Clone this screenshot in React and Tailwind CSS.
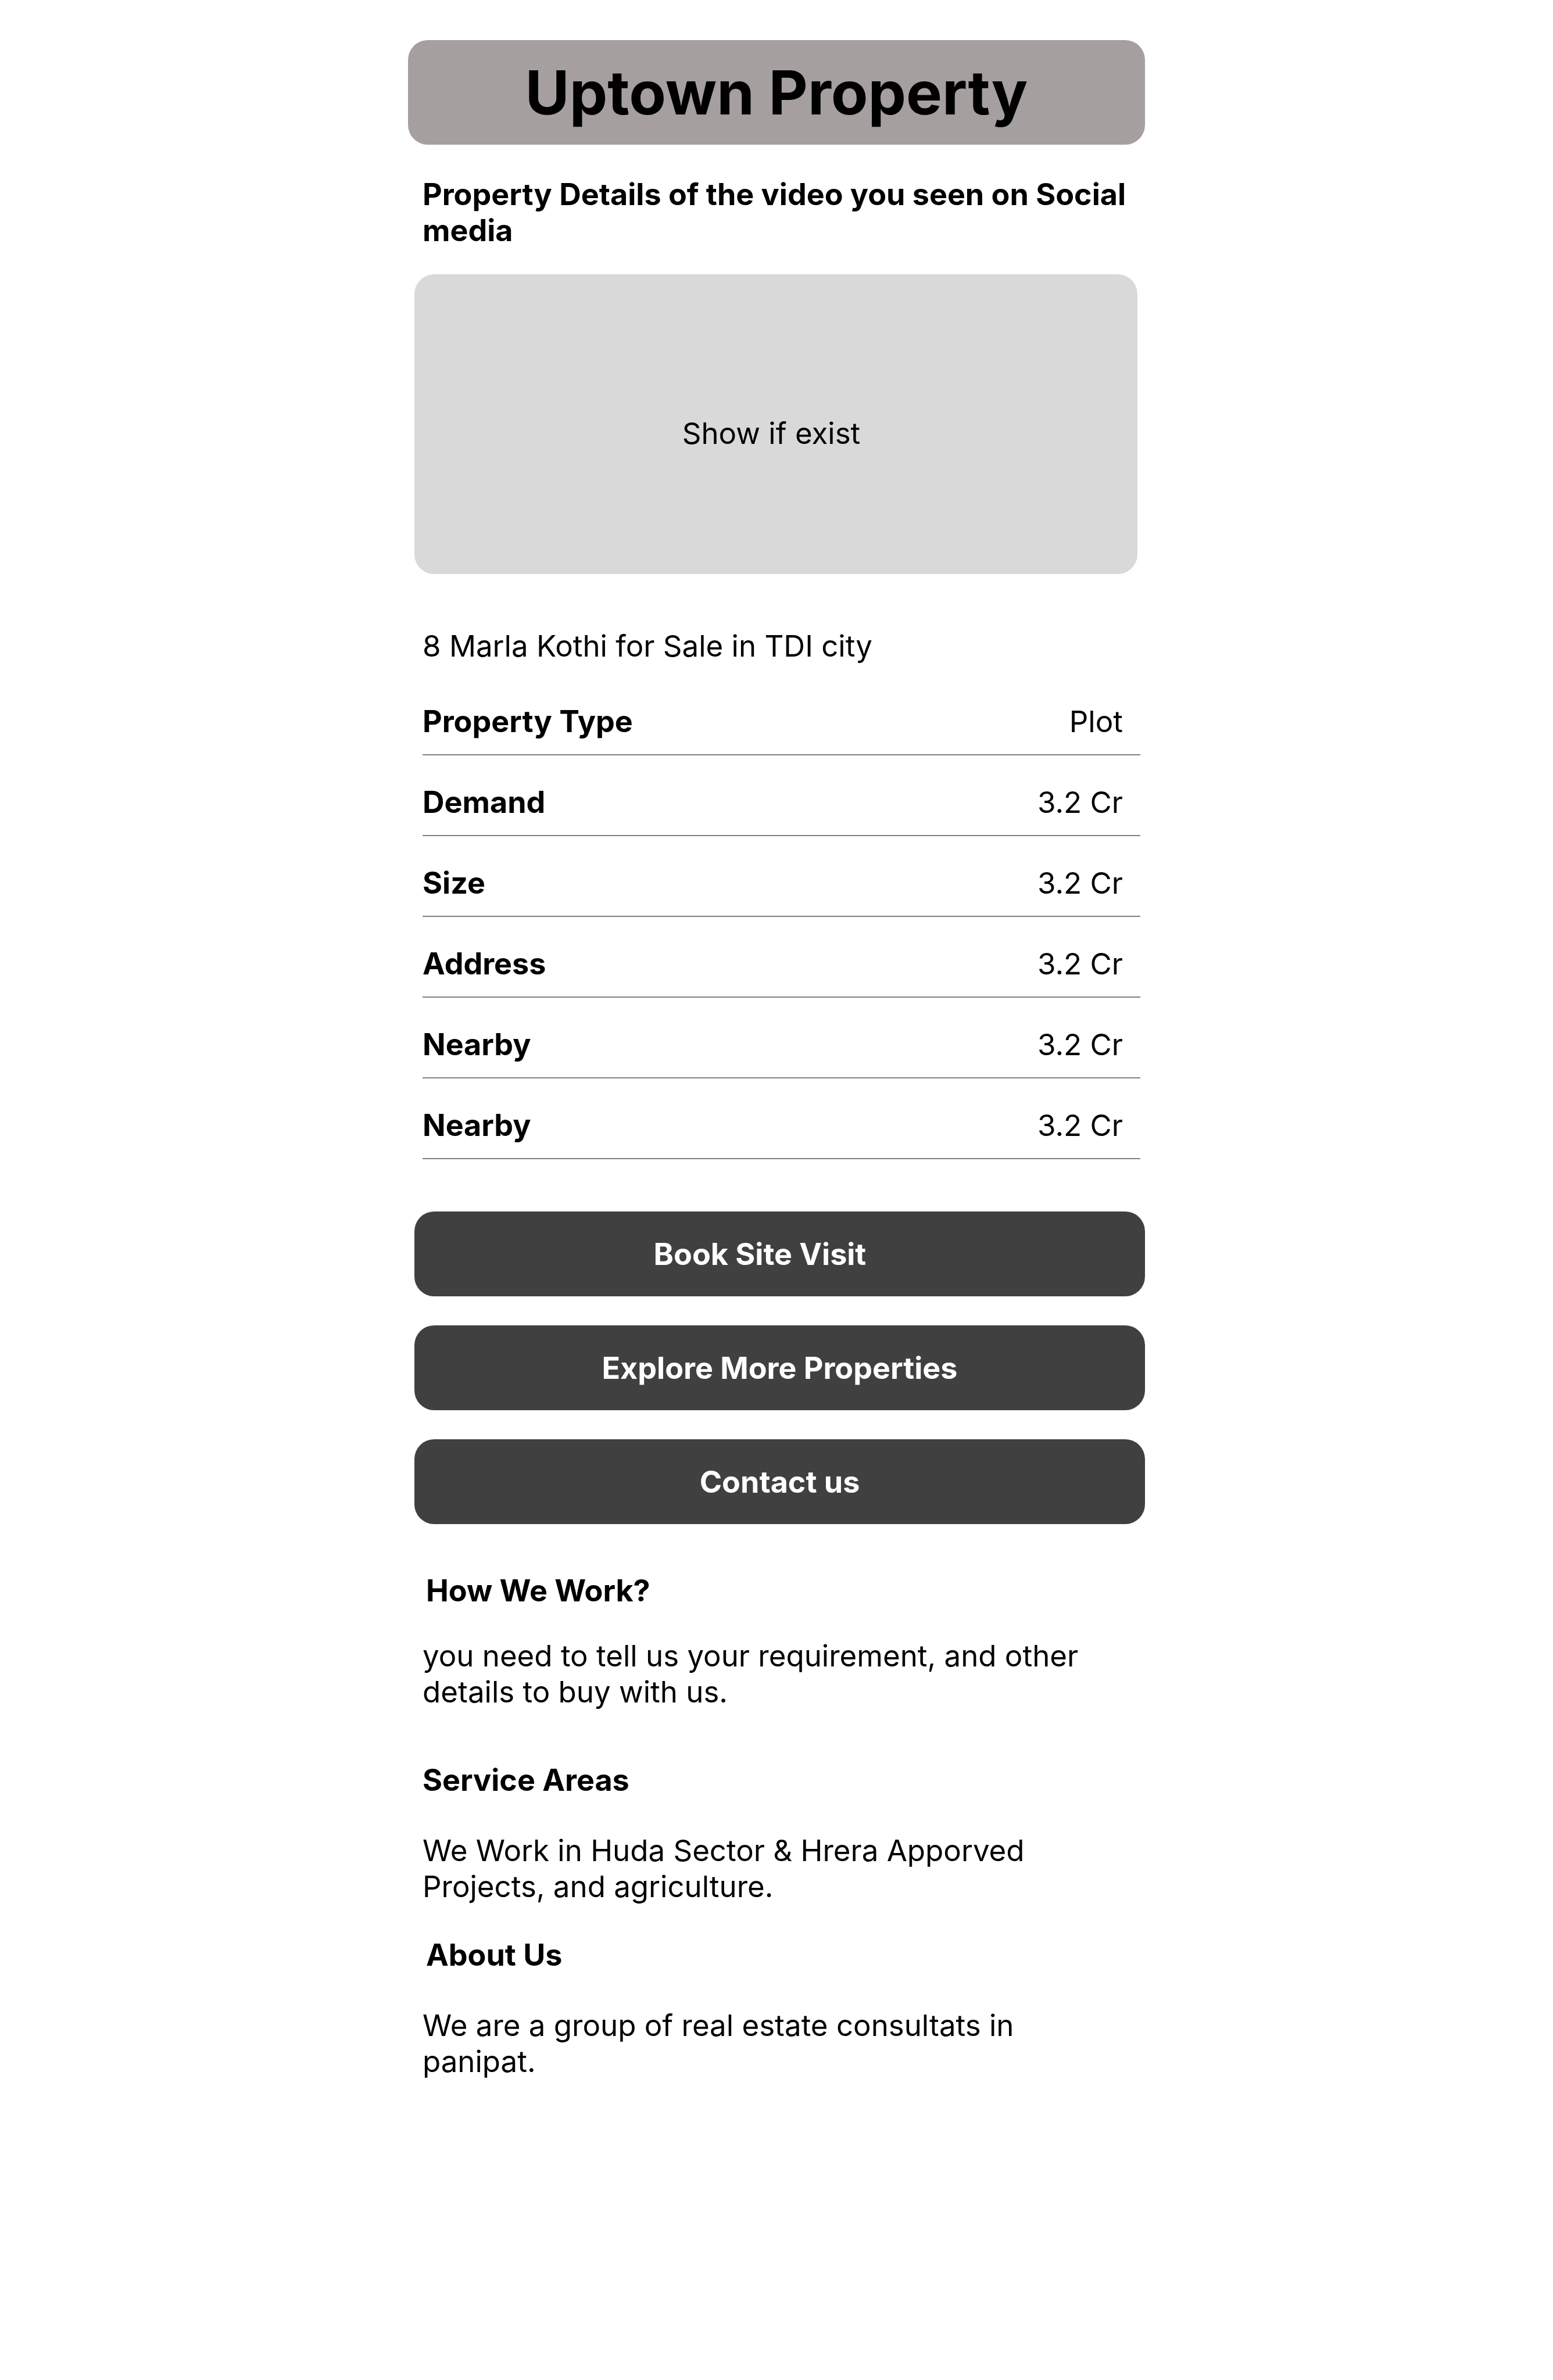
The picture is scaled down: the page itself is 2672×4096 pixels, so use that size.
import React from "react";

const details = [
  { label: "Property Type", value: "Plot" },
  { label: "Demand", value: "3.2 Cr" },
  { label: "Size", value: "3.2 Cr" },
  { label: "Address", value: "3.2 Cr" },
  { label: "Nearby", value: "3.2 Cr" },
  { label: "Nearby", value: "3.2 Cr" },
];

function ActionButton({ children, className = "" }) {
  return (
    <button
      type="button"
      className={`w-full rounded-[34px] bg-[#404040] pt-[43px] pb-[41px] text-center text-[52px] leading-[62px] font-bold text-white ${className}`}
    >
      {children}
    </button>
  );
}

function InfoSection({ title, children, className = "", titleClassName = "" }) {
  return (
    <section className={`flex flex-col pl-[25px] ${className}`}>
      <h2 className={`text-[52px] leading-[62px] font-bold ${titleClassName}`}>{title}</h2>
      <p className="max-w-[1212px]">{children}</p>
    </section>
  );
}

export default function App() {
  return (
    <div className="min-h-screen bg-white font-['Inter',sans-serif] text-[51px] leading-[62px] text-black">
      <div className="mx-auto w-full max-w-[1268px] pt-[69px] pb-20">
        <header className="rounded-[34px] bg-[#a59f9f] py-7 text-center">
          <h1 className="text-[104px] leading-[124px] font-bold">Uptown Property</h1>
        </header>

        <main>
          <p className="mt-[55px] pl-[25px] text-[52px] leading-[62px] font-bold">
            Property Details of the video you seen on Social media
          </p>

          <div className="mt-[44px] mr-[13px] ml-[11px] flex h-[516px] items-center justify-center rounded-[34px] bg-[#d9d9d9] pt-8 pr-4">
            Show if exist
          </div>

          <p className="mt-[93px] pl-[25px]">8 Marla Kothi for Sale in TDI city</p>

          <div className="mt-[18px] mr-2 ml-[25px]">
            <table className="w-full border-collapse">
              <tbody>
                {details.map((row, i) => (
                  <tr key={i} className="border-b-2 border-[#808080]">
                    <th scope="row" className="pt-[50px] pb-[25px] text-left text-[52px] leading-[62px] font-bold">
                      {row.label}
                    </th>
                    <td className="pt-[50px] pr-[30px] pb-[25px] text-right">{row.value}</td>
                  </tr>
                ))}
              </tbody>
            </table>
          </div>

          <div className="mt-[90px] ml-[11px] flex flex-col gap-[50px]">
            <ActionButton className="pr-[68px]">Book Site Visit</ActionButton>
            <ActionButton>Explore More Properties</ActionButton>
            <ActionButton>Contact us</ActionButton>
          </div>

          <InfoSection title="How We Work?" className="mt-[84px] gap-[50px]" titleClassName="pl-1.5">
            you need to tell us your requirement, and other details to buy with us.
          </InfoSection>
          <InfoSection title="Service Areas" className="mt-[90px] gap-[59px]">
            We Work in Huda Sector &amp; Hrera Apporved Projects, and agriculture.
          </InfoSection>
          <InfoSection title="About Us" className="mt-[56px] gap-[59px]" titleClassName="pl-1.5">
            We are a group of real estate consultats in panipat.
          </InfoSection>
        </main>
      </div>
    </div>
  );
}
